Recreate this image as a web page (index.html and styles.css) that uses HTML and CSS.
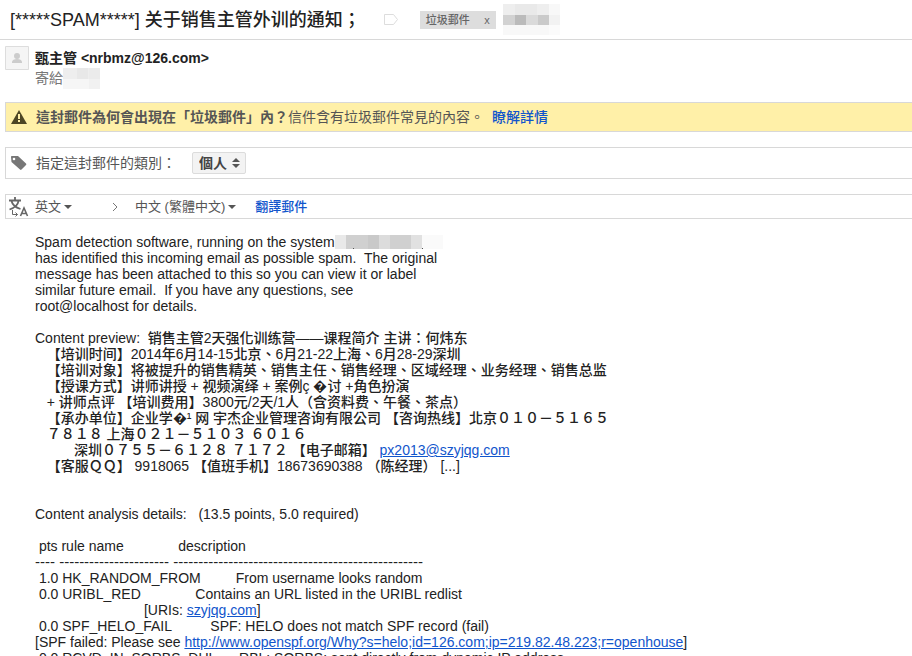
FILE: index.html
```html
<!DOCTYPE html>
<html lang="zh-Hant">
<head>
  <meta charset="utf-8">
  <title>关于销售主管外训的通知</title>
  <link rel="stylesheet" href="styles.css">
</head>
<body>
  <header class="subject">
    <h1>[*****SPAM*****] 关于销售主管外训的通知；</h1>
    <svg class="label-icon" width="14" height="12" viewBox="0 0 14 12"><path d="M.5 .5H9.500L13.500 5.500 9.500 10.500H.5z" fill="none" stroke="#ddd"/></svg>
    <span class="chip">垃圾郵件 <button type="button" aria-label="移除標籤">x</button></span>
    <svg class="mosaic" width="57" height="31" viewBox="0 0 57 31" shape-rendering="crispEdges">
      <path fill="#eee" d="M0 0h46v11H0z"/><path fill="#e9e9e9" d="M12 0h22v11H12z"/>
      <path fill="#f8f8f8" d="M46 0h11v11H46zM0 21h46v10H0z"/><path fill="#d2d2d2" d="M0 11h12v10H0z"/>
      <path fill="#bbb" d="M12 11h11v10H12z"/><path fill="#dadada" d="M23 11h12v10H23z"/>
      <path fill="#cacaca" d="M35 11h11v10H35z"/><path fill="#f2f2f2" d="M46 11h11v10H46z"/>
      <path fill="#fbfbfb" d="M46 21h11v10H46z"/>
    </svg>
  </header>

  <main>
    <section class="sender">
      <svg class="avatar" width="24" height="24" viewBox="0 0 24 24">
        <path d="M.5 .5h23v23H.5z" fill="#f5f5f5" stroke="#ddd"/>
        <circle cx="12" cy="10" r="3" fill="#ccc"/><path d="M7 17v-1c0-4 10-4 10 0v1z" fill="#ccc"/>
      </svg>
      <div>
        <div class="from">甄主管 &lt;nrbmz@126.com&gt;</div>
        <div class="to">寄給<svg class="to-mosaic" width="38" height="21" viewBox="0 0 38 21" shape-rendering="crispEdges">
          <path fill="#eee" d="M0 0h37v11H0z"/><path fill="#e8e8e8" d="M14 0h11v11H14z"/><path fill="#ebebeb" d="M26 0h11v11H26z"/>
          <path fill="#f6f6f6" d="M0 11h37v10H0z"/><path fill="#f1f1f1" d="M26 11h11v10H26z"/>
        </svg></div>
      </div>
    </section>

    <section class="bar warning">
      <svg class="bar-icon" width="18" height="16" viewBox="0 0 18 16"><path d="M9 1l8 14H1z" fill="#4d4624"/><path d="M8 5h2v5H8zM8 11h2v2H8z" fill="#fff0a8"/></svg>
      <p><b>這封郵件為何會出現在「垃圾郵件」內？</b>信件含有垃圾郵件常見的內容。<a href="#">瞭解詳情</a></p>
    </section>

    <section class="bar category">
      <svg class="bar-icon" width="18" height="16" viewBox="0 0 18 16"><path d="M1 2c0-.6.4-1 1-1h6l8 7.500c.5.500.5 1 0 1.500l-4.500 4.500c-.5.500-1 .5-1.500 0L1.500 7z" fill="#777"/><circle cx="4" cy="4" r="1.300" fill="#fff"/></svg>
      <label for="category">指定這封郵件的類別：</label>
      <span class="picker">
        <select id="category"><option>個人</option></select>
        <svg width="8" height="12" viewBox="0 0 8 12"><path d="M4 1l4 4H0zM4 11l4-4H0z" fill="#555"/></svg>
      </span>
    </section>

    <section class="bar translate">
      <svg class="bar-icon" width="20" height="22" viewBox="0 0 20 22" fill="none" stroke="#666">
        <path d="M0 4.500h12M6 1v3M2.500 5c1 4 4 6.500 9 8M9.500 5C9 9 5 12 .5 13.500" stroke-width="1.800"/>
        <path d="M3.500 14v4.500h5M6.500 16.500l2 2-2 2"/>
        <path d="M11.500 20l3.500-8 3.500 8M12.500 17.500h5" stroke-width="1.600"/>
      </svg>
      <button type="button" class="lang lang-from">英文</button>
      <svg class="chevron" width="6" height="10" viewBox="0 0 6 10"><path d="M1 1l4 4-4 4" fill="none" stroke="#777"/></svg>
      <button type="button" class="lang">中文 (繁體中文)</button>
      <a href="#">翻譯郵件</a>
    </section>

    <article class="message">Spam detection software, running on the system<svg class="host" width="108" height="14" viewBox="0 0 108 14" shape-rendering="crispEdges"><path fill="#e9e9e9" d="M0 0h11v14H0z"/><path fill="#d0d0d0" d="M11 0h22v14H11z"/><path fill="#c9c9c9" d="M33 0h11v14H33z"/><path fill="#dcdcdc" d="M44 0h11v14H44z"/><path fill="#d0d0d0" d="M55 0h21v14H55z"/><path fill="#e1e1e1" d="M76 0h11v14H76z"/><path fill="#fafafa" d="M87 0h21v14H87z"/><path fill="#555" d="M18 13h1v1h-1zM87 13h1v1h-1z"/></svg>
has identified this incoming email as possible spam.  The original
message has been attached to this so you can view it or label
similar future email.  If you have any questions, see
root@localhost for details.

Content preview:  销售主管2天强化训练营——课程简介 主讲：何炜东
   【培训时间】2014年6月14-15北京、6月21-22上海、6月28-29深圳
   【培训对象】将被提升的销售精英、销售主任、销售经理、区域经理、业务经理、销售总监
   【授课方式】讲师讲授 + 视频演绎 + 案例ç �讨 +角色扮演
   + 讲师点评 【培训费用】3800元/2天/1人（含资料费、午餐、茶点）
   【承办单位】企业学�¹ 网 宇杰企业管理咨询有限公司 【咨询热线】北京０１０－５１６５
   ７８１８ 上海０２１－５１０３ ６０１６
          深圳０７５５－６１２８ ７１７２ 【电子邮箱】 <a href="mailto:px2013@szyjqg.com">px2013@szyjqg.com</a>
   【客服ＱＱ】 9918065 【值班手机】18673690388 （陈经理） [...]


Content analysis details:   (13.5 points, 5.0 required)

 pts rule name              description
<span class="dashes">---- ---------------------- --------------------------------------------------</span>
 1.0 HK_RANDOM_FROM         From username looks random
 0.0 URIBL_RED              Contains an URL listed in the URIBL redlist
                            [URIs: <a href="http://szyjqg.com">szyjqg.com</a>]
 0.0 SPF_HELO_FAIL          SPF: HELO does not match SPF record (fail)
[SPF failed: Please see <a href="http://www.openspf.org/Why?s=helo;id=126.com;ip=219.82.48.223;r=openhouse">http://www.openspf.org/Why?s=helo;id=126.com;ip=219.82.48.223;r=openhouse</a>]
 0.0 RCVD_IN_SORBS_DUL      RBL: SORBS: sent directly from dynamic IP address</article>
  </main>
</body>
</html>
```
FILE: styles.css
```css
* {
  box-sizing: border-box;
}
body {
  margin: 0;
  background: #fff;
  color: #222;
  font: 14px/16px "Liberation Sans", "Noto Sans CJK TC", sans-serif;
  overflow-x: hidden;
}
a {
  color: #15c;
}
button, select {
  font: inherit;
  color: inherit;
  border: 0;
  padding: 0;
  background: none;
}

.subject {
  display: flex;
  align-items: center;
  height: 40px;
  padding-left: 10px;
  border-bottom: 1px solid #d8d8d8;
}
.subject h1 {
  margin: 0;
  font-size: 18px;
  font-weight: 500;
  line-height: 24px;
  white-space: nowrap;
}
.label-icon {
  margin: 0 22px 0 23px;
}
.chip {
  display: flex;
  justify-content: space-between;
  width: 76px;
  padding: 1px 6px;
  background: #ddd;
  color: #666;
  font-size: 11px;
  font-weight: 500;
  white-space: nowrap;
}
.mosaic {
  margin-left: 7px;
}

main {
  padding-left: 5px;
}
.sender {
  display: flex;
  gap: 6px;
  padding-top: 6px;
  height: 62px;
}
.from, .to {
  line-height: 20px;
}
.from {
  padding-top: 2px;
  font-weight: 700;
}
.to {
  display: flex;
  color: #777;
}

.bar {
  display: flex;
  align-items: center;
  height: 32px;
  margin-bottom: 15px;
  padding-left: 4px;
  border: 1px solid #d8d8d8;
  border-right: 0;
  color: #555;
  white-space: nowrap;
}
.bar p {
  margin: 0;
}
.bar a {
  text-decoration: none;
  font-weight: 500;
}
.bar-icon {
  flex: none;
  margin-right: 8px;
}
.warning {
  height: 30px;
  background: #fff0a8;
}
.warning a {
  margin-left: 8px;
}
.picker {
  display: flex;
  align-items: center;
  gap: 5px;
  height: 22px;
  margin-left: 16px;
  padding: 0 5px 0 6px;
  border: 1px solid #dcdcdc;
  border-radius: 2px;
  background: #f3f3f3;
}
.picker select {
  appearance: none;
  color: #444;
  font-weight: 700;
}
.translate {
  height: 25px;
  padding-left: 3px;
  font-size: 13px;
}
.translate .bar-icon {
  margin-right: 6px;
}
.lang {
  display: flex;
  align-items: center;
  gap: 3px;
}
.lang::after {
  content: "";
  border: 4px solid transparent;
  border-top-color: #555;
  border-bottom: 0;
}
.lang-from {
  width: 77px;
}
.chevron {
  margin-right: 17px;
}
.translate a {
  margin-left: 19px;
}

.message {
  padding-left: 30px;
  font-weight: 500;
  white-space: pre;
}
.host {
  height: 14px;
  vertical-align: -2px;
}
/* keeps the rules as wide as the columns above and below */
.dashes {
  font-size: 15px;
}
```
